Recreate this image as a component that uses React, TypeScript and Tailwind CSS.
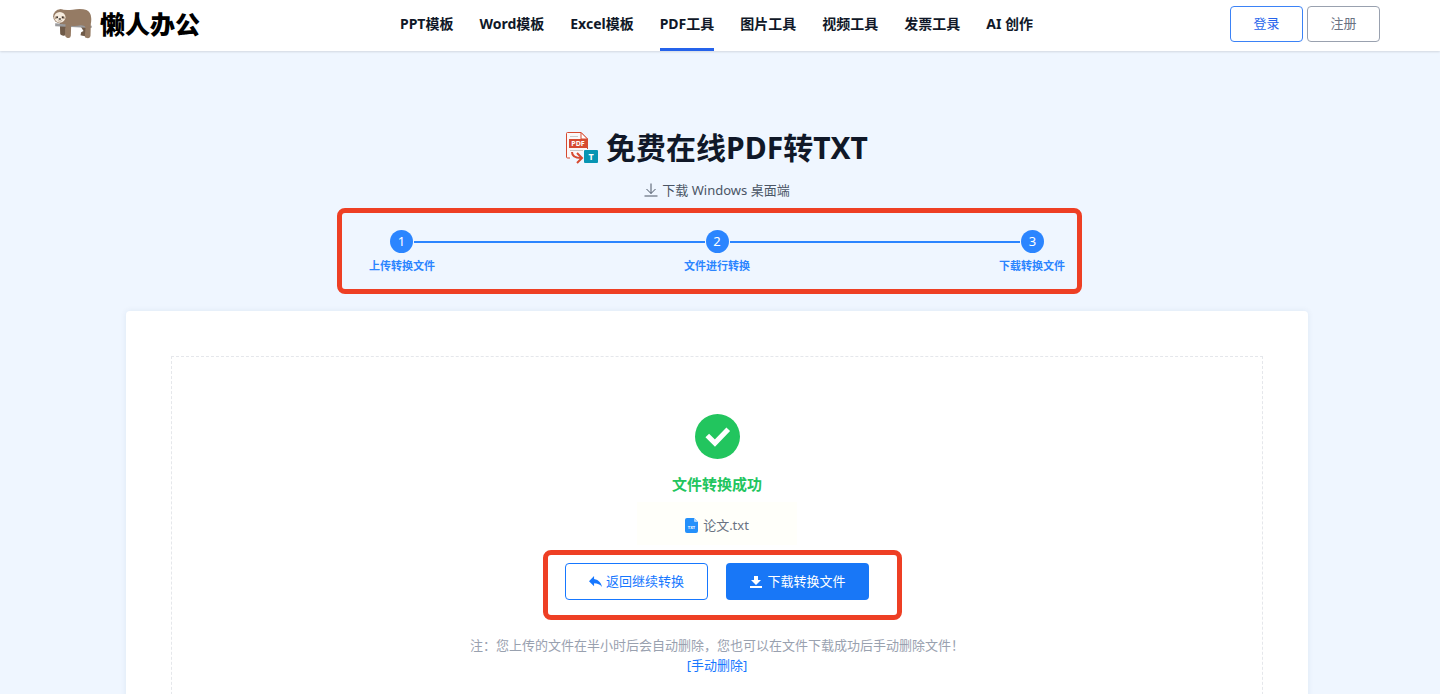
const navItems = [
  "PPT模板",
  "Word模板",
  "Excel模板",
  "PDF工具",
  "图片工具",
  "视频工具",
  "发票工具",
  "AI 创作",
];

const steps = ["上传转换文件", "文件进行转换", "下载转换文件"];

function SlothLogo() {
  return (
    <svg viewBox="40 26 116 90" className="h-[30px] w-[39px]" aria-hidden="true">
      {/* far legs */}
      <path d="M60 64 H92 V84 H78 V102 Q78 107 70 106 Q60 105 61 98 Z" fill="#6f5a48" />
      <path d="M116 68 H142 L139 106 Q132 108 122 105 L124 96 L131 92 Z" fill="#6f5a48" />
      {/* branch */}
      <path d="M46 69 L156 76 L155 83 L46 78 Z" fill="#9a9a9c" />
      {/* body and near legs */}
      <path
        d="M60 27 Q78 30 98 28 Q124 24 140 29 Q153 35 154 52 Q155 60 153 70 L152 107 Q151 115 141 113 Q133 112 135 106 L137 84 Q136 73 122 75 Q104 78 94 76 L93 106 Q92 115 83 113 Q75 111 76 104 L77 72 Q62 72 56 66 Z"
        fill="#957b64"
      />
      {/* head */}
      <circle cx="61" cy="48" r="21" fill="#957b64" />
      <ellipse cx="60" cy="51" rx="17" ry="16" fill="#f6ecdf" />
      <path d="M44 52 Q47 44 55 48 Q55 55 45 57 Z" fill="#b39a83" />
      <path d="M65 48 Q73 44 76 54 Q72 58 65 54 Z" fill="#b39a83" />
      <circle cx="52" cy="51" r="2.5" fill="#222" />
      <circle cx="69" cy="51" r="2.5" fill="#222" />
      <ellipse cx="60" cy="56" rx="4" ry="2.5" fill="#2d2825" />
      <path d="M54 61 Q60 65 67 60" fill="none" stroke="#88705c" strokeWidth="1.5" />
    </svg>
  );
}

function PdfToTxtIcon() {
  return (
    <svg viewBox="0 0 32 32" className="size-8 shrink-0" aria-hidden="true">
      <path d="M4 26 H1.5 Q0.5 26 0.5 25 V1.5 Q0.5 0.5 1.5 0.5 H15 L21.5 7 V17" fill="#fbf7f8" stroke="#d64a30" />
      <path d="M15 0.5 V7 H21.5 Z" fill="#fff" stroke="#d64a30" />
      <path d="M4 4.5 H12 M4 18.5 H17" stroke="#c9c9c9" />
      <rect x="3" y="7" width="18" height="9" fill="#d64a30" />
      <text x="12" y="14" fontSize="7" fontWeight="700" fill="#fff" textAnchor="middle" fontFamily="Noto Sans, sans-serif">
        PDF
      </text>
      <path d="M6 20 Q6 26 15 26" fill="none" stroke="#d64a30" strokeWidth="2" />
      <path d="M11 21 L16 26 L11 31" fill="none" stroke="#d64a30" strokeWidth="2" />
      <rect x="18" y="18" width="14" height="13" rx="1" fill="#0795b3" />
      <text x="25" y="28" fontSize="9" fontWeight="700" fill="#fff" textAnchor="middle" fontFamily="Noto Sans, sans-serif">
        T
      </text>
    </svg>
  );
}

function TxtFileIcon() {
  return (
    <svg viewBox="0 0 13 15" className="h-[15px] w-[13px]" aria-hidden="true">
      <path d="M2 0 H9 L13 4 V13 Q13 15 11 15 H2 Q0 15 0 13 V2 Q0 0 2 0 Z" fill="#2490fb" />
      <path d="M9 0 L13 4 H10 Q9 4 9 3 Z" fill="#a9d4ff" />
      <text x="6.5" y="10.5" fontSize="4" fontWeight="700" fill="#fff" textAnchor="middle" fontFamily="Noto Sans, sans-serif">
        TXT
      </text>
    </svg>
  );
}

function Header() {
  return (
    <header className="relative z-10 flex h-[51px] items-center justify-between bg-white pr-[60px] pl-[53px] shadow-[0_1px_2px_rgba(0,0,0,0.12)]">
      <a href="#" className="flex flex-1 items-center gap-2 pb-1">
        <SlothLogo />
        <span className="text-[25px] leading-8 font-black text-black">懒人办公</span>
      </a>
      <nav className="flex h-full gap-[26px]">
        {navItems.map((item) => (
          <a
            key={item}
            href="#"
            className={
              item === "PDF工具"
                ? "flex h-full items-center border-b-3 border-[#2563eb] text-sm font-bold text-gray-900"
                : "flex h-full items-center border-b-3 border-transparent text-sm font-bold text-gray-900"
            }
          >
            {item}
          </a>
        ))}
      </nav>
      <div className="flex flex-1 justify-end gap-1 pb-1">
        <button className="h-9 w-[73px] rounded border border-[#3b82f6] text-[13px] text-[#2563eb]">登录</button>
        <button className="h-9 w-[73px] rounded border border-gray-400 text-[13px] text-gray-500">注册</button>
      </div>
    </header>
  );
}

function Steps() {
  return (
    <div className="relative mx-auto mt-[30px] w-[696px] text-[#2b85ff]">
      <div className="flex items-center gap-px px-[21px]">
        {steps.map((step, i) => (
          <div key={step} className={i === 0 ? "flex items-center" : "flex flex-1 items-center gap-px"}>
            {i > 0 && <div className="h-0.5 flex-1 bg-[#2b85ff]" />}
            <span className="flex size-[23px] items-center justify-center rounded-full bg-[#2b85ff] text-[13px] text-white">
              {i + 1}
            </span>
          </div>
        ))}
      </div>
      <div className="mt-[3px] flex justify-between text-[11px] leading-5 font-bold">
        {steps.map((step) => (
          <span key={step}>{step}</span>
        ))}
      </div>
      {/* highlight frame */}
      <div className="pointer-events-none absolute -top-[22px] -right-[17px] -bottom-[18px] -left-8 rounded-lg border-[5px] border-[#ee3f24]" />
    </div>
  );
}

function Result() {
  return (
    <section className="mx-[126px] mt-[35px] rounded bg-white p-[45px] shadow-[0_0_6px_rgba(30,64,120,0.08)]">
      <div className="flex flex-col items-center border border-dashed border-gray-200 pt-[57px] pb-16">
        <svg viewBox="0 0 44 44" className="size-[45px]" aria-hidden="true">
          <circle cx="22" cy="22" r="22" fill="#22c55e" />
          <path d="M12 21 L19.5 28.5 L32.5 15" fill="none" stroke="#fff" strokeWidth="5" />
        </svg>
        <h2 className="mt-[13px] text-[15px] leading-6 font-bold text-[#22c55e]">文件转换成功</h2>
        <div className="mt-1.5 flex h-[43px] w-40 items-center justify-center gap-[5px] bg-[#fffffa] pt-1 text-[13px] text-gray-500">
          <TxtFileIcon />
          <span>论文.txt</span>
        </div>
        <div className="relative mt-[18px] flex gap-[18px] text-[13px]">
          <button className="flex h-[37px] w-[143px] items-center justify-center gap-1 rounded border border-[#1677ff] bg-white text-[#1677ff]">
            <svg viewBox="3 4 18 17" className="size-[13px]" fill="currentColor" aria-hidden="true">
              <path d="M10 9V5l-7 7 7 7v-4.1c5 0 8.5 1.6 11 5.1-1-5-4-10-11-11z" />
            </svg>
            返回继续转换
          </button>
          <button className="flex h-[37px] w-[143px] items-center justify-center gap-1 rounded bg-[#1877f7] text-white">
            <svg viewBox="0 0 14 14" className="size-[14px]" fill="currentColor" aria-hidden="true">
              <path d="M5 1 H9 V5 H12 L7 10 L2 5 H5 Z M1 11 H13 V13 H1 Z" />
            </svg>
            下载转换文件
          </button>
          {/* highlight frame */}
          <div className="pointer-events-none absolute -top-[13px] -right-[33px] -bottom-5 -left-[22px] rounded-lg border-[5px] border-[#ee3f24]" />
        </div>
        <p className="mt-[35px] text-[13px] leading-5 text-gray-400">
          注：您上传的文件在半小时后会自动删除，您也可以在文件下载成功后手动删除文件！
        </p>
        <a href="#" className="text-[13px] leading-5 text-[#1677ff]">
          [手动删除]
        </a>
      </div>
    </section>
  );
}

export default function App() {
  return (
    <div className="min-h-screen bg-[#eff6ff] font-['Noto_Sans','Noto_Sans_CJK_SC',sans-serif]" lang="zh-CN">
      <Header />
      <main className="pt-[75px] pr-[6px] pb-12">
        <div className="flex items-center justify-center gap-2">
          <PdfToTxtIcon />
          <h1 className="text-3xl leading-[44px] font-bold text-gray-900">免费在线PDF转TXT</h1>
        </div>
        <a href="#" className="mt-[10px] flex items-center justify-center gap-1 text-[13px] leading-5 text-gray-600">
          <svg viewBox="0 0 14 14" className="size-[14px]" fill="none" stroke="currentColor" aria-hidden="true">
            <path d="M7 0.5 V10.5 M2.5 6 L7 10.5 L11.5 6 M0.5 13 H13.5" />
          </svg>
          下载 Windows 桌面端
        </a>
        <Steps />
        <Result />
      </main>
    </div>
  );
}
